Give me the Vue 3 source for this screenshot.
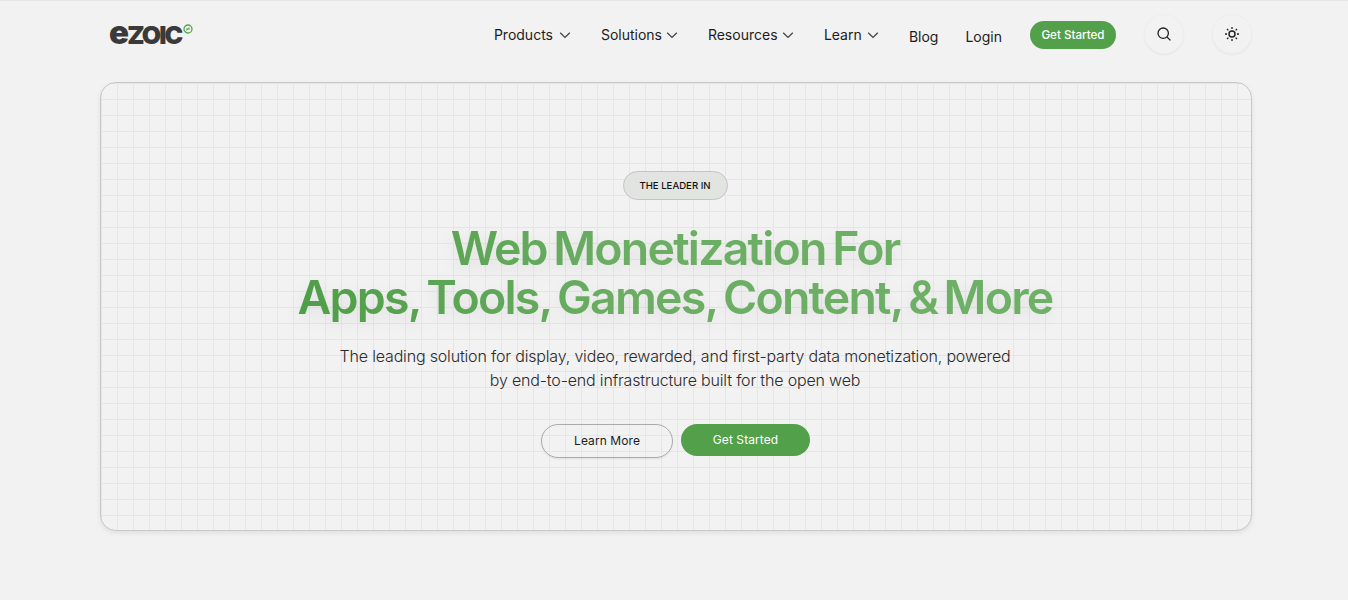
<template>
  <div class="page">
    <header class="topbar">
      <a class="logo" href="#">
        <span class="logo-text"><span class="logo-e">e</span>ZOIC</span>
        <svg class="logo-mark" viewBox="0 0 10 10" width="10" height="10">
          <circle cx="5" cy="5" r="4" fill="none" stroke="#58a550" stroke-width="1.3" />
          <path d="M3 5h4M6 3.4 3.6 6.6" fill="none" stroke="#58a550" stroke-width="1" />
        </svg>
      </a>
      <nav class="nav">
        <a v-for="item in menus" :key="item.label" class="nav-item" :style="{ width: item.width + 'px' }" href="#">
          {{ item.label }}
          <svg viewBox="0 0 12 12" width="12" height="12" class="chev">
            <path d="M1.2 3.8 6 8.4l4.8-4.6" fill="none" stroke="currentColor" stroke-width="1.3" />
          </svg>
        </a>
        <a class="nav-link blog" href="#">Blog</a>
        <a class="nav-link login" href="#">Login</a>
        <a class="nav-cta" href="#">Get Started</a>
        <button type="button" class="round search" aria-label="Search">
          <svg viewBox="0 0 16 16" width="16" height="16">
            <circle cx="7.2" cy="7.2" r="5.2" fill="none" stroke="#222" stroke-width="1.3" />
            <path d="m11 11 3.4 3.4" stroke="#222" stroke-width="1.3" />
          </svg>
        </button>
        <button type="button" class="round" aria-label="Toggle theme">
          <svg viewBox="0 0 16 16" width="16" height="16">
            <circle cx="8" cy="8" r="3" fill="none" stroke="#222" stroke-width="1.5" />
            <path d="M8 1v2M8 13v2M1 8h2M13 8h2M3 3l1.4 1.4M11.6 11.6 13 13M3 13l1.4-1.4M11.6 4.4 13 3" stroke="#222" stroke-width="1.3" />
          </svg>
        </button>
      </nav>
    </header>

    <section class="hero">
      <span class="badge">THE LEADER IN</span>
      <h1 class="title">Web Monetization For<br>Apps, Tools, Games, Content, &amp; More</h1>
      <p class="lead">The leading solution for display, video, rewarded, and first-party data monetization, powered<br>by end-to-end infrastructure built for the open web</p>
      <div class="actions">
        <a class="btn ghost" href="#">Learn More</a>
        <a class="btn solid" href="#">Get Started</a>
      </div>
    </section>
  </div>
</template>

<script setup>
const menus = [
  { label: 'Products', width: 77 },
  { label: 'Solutions', width: 77 },
  { label: 'Resources', width: 86 },
  { label: 'Learn', width: 55 }
]
</script>

<style>
html, body {
  margin: 0;
  background: #f2f2f2;
}
</style>

<style scoped>
.page {
  min-height: 600px;
  box-sizing: border-box;
  border-top: 1px solid #e6e6e6;
  padding-left: 100px;
  font-family: Inter, "Liberation Sans", sans-serif;
  color: #1c1c1c;
}

a {
  color: inherit;
  text-decoration: none;
}

.topbar {
  width: 1152px;
  height: 81px;
  box-sizing: border-box;
  padding: 13px 0 0 9px;
  display: flex;
  align-items: flex-start;
  justify-content: space-between;
}

.logo {
  display: flex;
  align-items: flex-start;
  margin-top: 3px;
}

.logo-text {
  font-size: 25px;
  line-height: 30px;
  font-weight: 900;
  letter-spacing: -1.9px;
  color: #3a3a3a;
}

.logo-e {
  font-size: 33px;
  line-height: 30px;
}

.logo-mark {
  margin: 7px 0 0 2px;
}

.nav {
  display: flex;
  align-items: center;
  height: 40px;
}

.nav-item {
  display: flex;
  align-items: center;
  justify-content: space-between;
  font-size: 14px;
  margin-right: 30px;
}

.chev {
  color: #444;
  margin-top: 1px;
}

.nav-link {
  font-size: 14px;
  margin-top: 4px;
}

.blog {
  margin-right: 27px;
}

.login {
  margin-right: 28px;
}

.nav-cta {
  width: 86px;
  height: 28px;
  border-radius: 14px;
  background: #52a04a;
  color: #fff;
  font-size: 11.6px;
  font-weight: 500;
  line-height: 28px;
  text-align: center;
  margin-right: 28px;
  margin-top: 1px;
}

.round {
  width: 40px;
  height: 40px;
  padding: 0;
  border: 1px solid #efefef;
  border-radius: 50%;
  background: #f2f2f2;
  box-shadow: 0 1px 2px rgba(0, 0, 0, 0.05);
  display: flex;
  align-items: center;
  justify-content: center;
}

.search {
  margin-right: 28px;
}

.hero {
  width: 1152px;
  height: 449px;
  box-sizing: border-box;
  border: 1px solid #c8c8c8;
  border-radius: 16px;
  box-shadow: 0 2px 5px rgba(0, 0, 0, 0.08);
  background-color: #f2f2f2;
  background-image:
    linear-gradient(#e6e6e6 1px, transparent 1px),
    linear-gradient(90deg, #e6e6e6 1px, transparent 1px);
  background-size: 16px 16px;
  background-position: 0 0;
  padding: 88px 2px 0 0;
  display: flex;
  flex-direction: column;
  align-items: center;
  text-align: center;
}

.badge {
  box-sizing: border-box;
  width: 105px;
  height: 29px;
  border: 1px solid #c4c4c4;
  border-radius: 15px;
  background: rgba(224, 226, 224, 0.9);
  font-size: 9.6px;
  font-weight: 500;
  line-height: 27px;
  color: #111;
}

.title {
  margin: 24px 0 0;
  font-size: 46.5px;
  line-height: 49px;
  font-weight: 600;
  letter-spacing: -1.8px;
  word-spacing: -3.5px;
  background: linear-gradient(90deg, #4f9e47 0%, #6aad63 42%, #6fb067 100%);
  -webkit-background-clip: text;
  background-clip: text;
  color: transparent;
  filter: drop-shadow(0 6px 8px rgba(0, 0, 0, 0.07));
}

.lead {
  margin: 22px 0 0;
  font-size: 16px;
  line-height: 24px;
  font-weight: 300;
  letter-spacing: -0.17px;
  color: #2a2a2a;
}

.actions {
  display: flex;
  align-items: flex-start;
  gap: 8px;
  margin-top: 32px;
}

.btn {
  box-sizing: border-box;
  border-radius: 17px;
  font-size: 12px;
  letter-spacing: 0.08px;
  text-align: center;
  padding-left: 1px;
}

.ghost {
  width: 132px;
  height: 34px;
  border: 1px solid #aaa;
  line-height: 32px;
  box-shadow: 0 1px 2px rgba(0, 0, 0, 0.08);
}

.solid {
  width: 129px;
  height: 32px;
  background: #52a04a;
  color: #fff;
  line-height: 31px;
}
</style>
